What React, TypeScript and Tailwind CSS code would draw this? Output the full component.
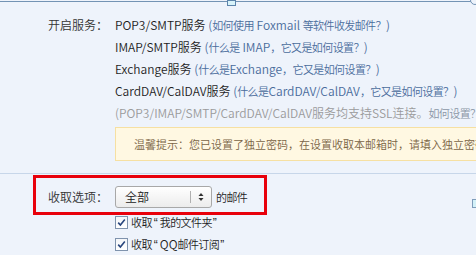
import React from "react";

const services: { name: string; link: string }[] = [
  { name: "POP3/SMTP服务", link: "(如何使用 Foxmail 等软件收发邮件？)" },
  { name: "IMAP/SMTP服务", link: "(什么是 IMAP，它又是如何设置？)" },
  { name: "Exchange服务", link: "(什么是Exchange，它又是如何设置？)" },
  { name: "CardDAV/CalDAV服务", link: "(什么是CardDAV/CalDAV，它又是如何设置？)" },
];

const fetchOptions = ["我的文件夹", "QQ邮件订阅"];

const cjk = /([\u3000-\u303f\u4e00-\u9fff\uff00-\uffef]+)/;

// latin stays at 12px, chinese glyphs are set tighter
function TightText({ text }: { text: string }) {
  const parts = text.split(cjk).filter(Boolean);
  return (
    <>
      {parts.map((p, i) =>
        cjk.test(p) ? (
          <span key={i} className="text-[11px] tracking-[-0.6px]">
            {p}
          </span>
        ) : (
          <span key={i}>{p}</span>
        )
      )}
    </>
  );
}

function CheckBox() {
  return (
    <span className="flex h-[13px] w-[13px] items-center justify-center border border-[#7f93ad] bg-gradient-to-b from-[#f4f6f9] to-[#ffffff]">
      <svg width="9" height="9" viewBox="0 0 9 9">
        <path
          d="M1.2 4.6 L3.4 7 L7.8 1.6"
          fill="none"
          stroke="#27457d"
          strokeWidth="1.6"
        />
      </svg>
    </span>
  );
}

function SelectBox() {
  return (
    <div className="relative flex h-[22px] w-[97px] items-center rounded-[3px] border border-[#a8a8a8] bg-gradient-to-b from-[#ffffff] to-[#ececec] pl-[9px] text-[#222]">
      <span>全部</span>
      <span className="ml-auto h-[12px] w-px bg-[#b0b0b0]" />
      <svg className="mx-[7px]" width="6" height="10" viewBox="0 0 6 10">
        <path d="M0.5 4 L3 1 L5.5 4 Z" fill="#333" />
        <path d="M0.5 6 L3 9 L5.5 6 Z" fill="#333" />
      </svg>
    </div>
  );
}

export default function App() {
  return (
    <div className="relative h-[255px] w-[476px] overflow-hidden bg-[#eef3fb] text-[12px] text-[#1e1e1e] font-[350] [font-family:'Noto_Sans_CJK_SC',sans-serif]">
      {/* selection frame top edge */}
      <div className="mt-px h-px w-[472px] bg-[#7393b4]" />
      <div className="absolute left-[227px] top-0 h-[6px] w-[9px] border border-[#5d84ab] bg-[#d8f3fa]" />
      <div className="absolute left-[470px] top-[-5px] h-[10px] w-[10px] rounded-full border border-[#7393b4] bg-[#eef3fb]" />

      <div className="flex pt-[12px]">
        <div className="w-[115px] shrink-0 pl-[48px] leading-[22px] text-[#333]">开启服务：</div>
        <div className="flex flex-col">
          {services.map((s) => (
            <div key={s.name} className="whitespace-nowrap leading-[22px]">
              {s.name}{" "}
              <span className="text-[#4a6c9c]">
                <TightText text={s.link} />
              </span>
            </div>
          ))}
          <div className="whitespace-nowrap leading-[22px] text-[#9b9b9b]">
            (POP3/IMAP/SMTP/CardDAV/CalDAV服务均支持SSL连接。
            <span className="text-[#8a96a6]">
              <TightText text="如何设置？" />
            </span>
            )
          </div>
          <div className="mt-[3px] flex h-[34px] w-[380px] items-center whitespace-nowrap border border-[#f6e0a2] bg-[#fff8e2] pl-[18px] text-[11px] text-[#7a6445]">
            温馨提示：您已设置了独立密码，在设置收取本邮箱时，请填入独立密码
          </div>
        </div>
      </div>

      <div className="mt-[12px] h-px w-full bg-[#c7d6e9]" />

      <div className="mt-[12px] flex h-[22px] items-center">
        <div className="w-[115px] shrink-0 pl-[48px] text-[#333]">收取选项：</div>
        <SelectBox />
        <span className="ml-[4px]">
          <TightText text="的邮件" />
        </span>
      </div>

      <div className="mt-[3px] flex flex-col pl-[115px]">
        {fetchOptions.map((o) => (
          <div key={o} className="flex h-[22px] items-center gap-[3px] whitespace-nowrap">
            <CheckBox />
            <span>
              <TightText text="收取" />
              <span className="mx-[2px] [font-family:'Liberation_Sans',sans-serif]">“</span>
              <TightText text={o} />
              <span className="mx-[1px] [font-family:'Liberation_Sans',sans-serif]">”</span>
            </span>
          </div>
        ))}
      </div>

      {/* red annotation frame */}
      <div className="absolute left-[33px] top-[175px] h-[40px] w-[234px] border-[3px] border-[#e8000b]" />
      {/* clipped control at right edge */}
      <div className="absolute left-[472px] top-[199px] h-[9px] w-[9px] border border-[#7f9dba] bg-[#d4f1f8]" />
    </div>
  );
}
